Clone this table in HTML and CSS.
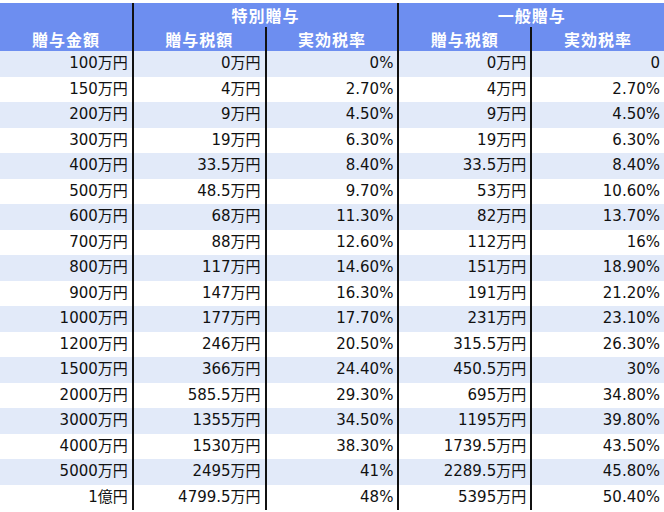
FILE: index.html
```html
<!DOCTYPE html>
<html lang="ja">
<head>
<meta charset="utf-8">
<link rel="stylesheet" href="styles.css">
</head>
<body>
<div class="wrap">
<table class="tax">
  <thead>
    <tr class="h1">
      <th class="c1 sep"></th>
      <th colspan="2" class="sep">特別贈与</th>
      <th colspan="2">一般贈与</th>
    </tr>
    <tr class="h2">
      <th class="sep">贈与金額</th>
      <th class="sep">贈与税額</th>
      <th class="sep">実効税率</th>
      <th class="sep">贈与税額</th>
      <th>実効税率</th>
    </tr>
  </thead>
  <tbody>
    <tr><td>100万円</td><td>0万円</td><td>0%</td><td>0万円</td><td>0</td></tr>
    <tr><td>150万円</td><td>4万円</td><td>2.70%</td><td>4万円</td><td>2.70%</td></tr>
    <tr><td>200万円</td><td>9万円</td><td>4.50%</td><td>9万円</td><td>4.50%</td></tr>
    <tr><td>300万円</td><td>19万円</td><td>6.30%</td><td>19万円</td><td>6.30%</td></tr>
    <tr><td>400万円</td><td>33.5万円</td><td>8.40%</td><td>33.5万円</td><td>8.40%</td></tr>
    <tr><td>500万円</td><td>48.5万円</td><td>9.70%</td><td>53万円</td><td>10.60%</td></tr>
    <tr><td>600万円</td><td>68万円</td><td>11.30%</td><td>82万円</td><td>13.70%</td></tr>
    <tr><td>700万円</td><td>88万円</td><td>12.60%</td><td>112万円</td><td>16%</td></tr>
    <tr><td>800万円</td><td>117万円</td><td>14.60%</td><td>151万円</td><td>18.90%</td></tr>
    <tr><td>900万円</td><td>147万円</td><td>16.30%</td><td>191万円</td><td>21.20%</td></tr>
    <tr><td>1000万円</td><td>177万円</td><td>17.70%</td><td>231万円</td><td>23.10%</td></tr>
    <tr><td>1200万円</td><td>246万円</td><td>20.50%</td><td>315.5万円</td><td>26.30%</td></tr>
    <tr><td>1500万円</td><td>366万円</td><td>24.40%</td><td>450.5万円</td><td>30%</td></tr>
    <tr><td>2000万円</td><td>585.5万円</td><td>29.30%</td><td>695万円</td><td>34.80%</td></tr>
    <tr><td>3000万円</td><td>1355万円</td><td>34.50%</td><td>1195万円</td><td>39.80%</td></tr>
    <tr><td>4000万円</td><td>1530万円</td><td>38.30%</td><td>1739.5万円</td><td>43.50%</td></tr>
    <tr><td>5000万円</td><td>2495万円</td><td>41%</td><td>2289.5万円</td><td>45.80%</td></tr>
    <tr><td>1億円</td><td>4799.5万円</td><td>48%</td><td>5395万円</td><td>50.40%</td></tr>
  </tbody>
</table>
</div>
</body>
</html>
```
FILE: styles.css
```css
html, body {
  margin: 0;
  padding: 0;
  background: #ffffff;
}
.wrap {
  width: 664px;
  padding-top: 3px;
}
.tax {
  width: 664px;
  border-collapse: collapse;
  table-layout: fixed;
  font-family: "DejaVu Sans", "Noto Sans CJK JP", sans-serif;
  font-size: 15px;
  color: #111111;
}
.tax th {
  background: #6d8ef0;
  color: #ffffff;
  font-weight: bold;
  font-family: "Noto Sans CJK JP", sans-serif;
  font-size: 16px;
  letter-spacing: 1px;
  height: 24px;
  padding: 0;
  text-align: center;
  line-height: 24px;
}
.tax th.sep, .tax td:nth-child(1), .tax td:nth-child(2), .tax td:nth-child(3), .tax td:nth-child(4) {
  border-right: 2px solid #111111;
}
.tax td {
  height: 25.5px;
  padding: 0 4px 0 0;
  text-align: right;
  line-height: 25px;
  white-space: nowrap;
}
.tax tbody tr:nth-child(odd) td {
  background: #e2eaf9;
}
.tax tbody tr:nth-child(even) td {
  background: #ffffff;
}
```
